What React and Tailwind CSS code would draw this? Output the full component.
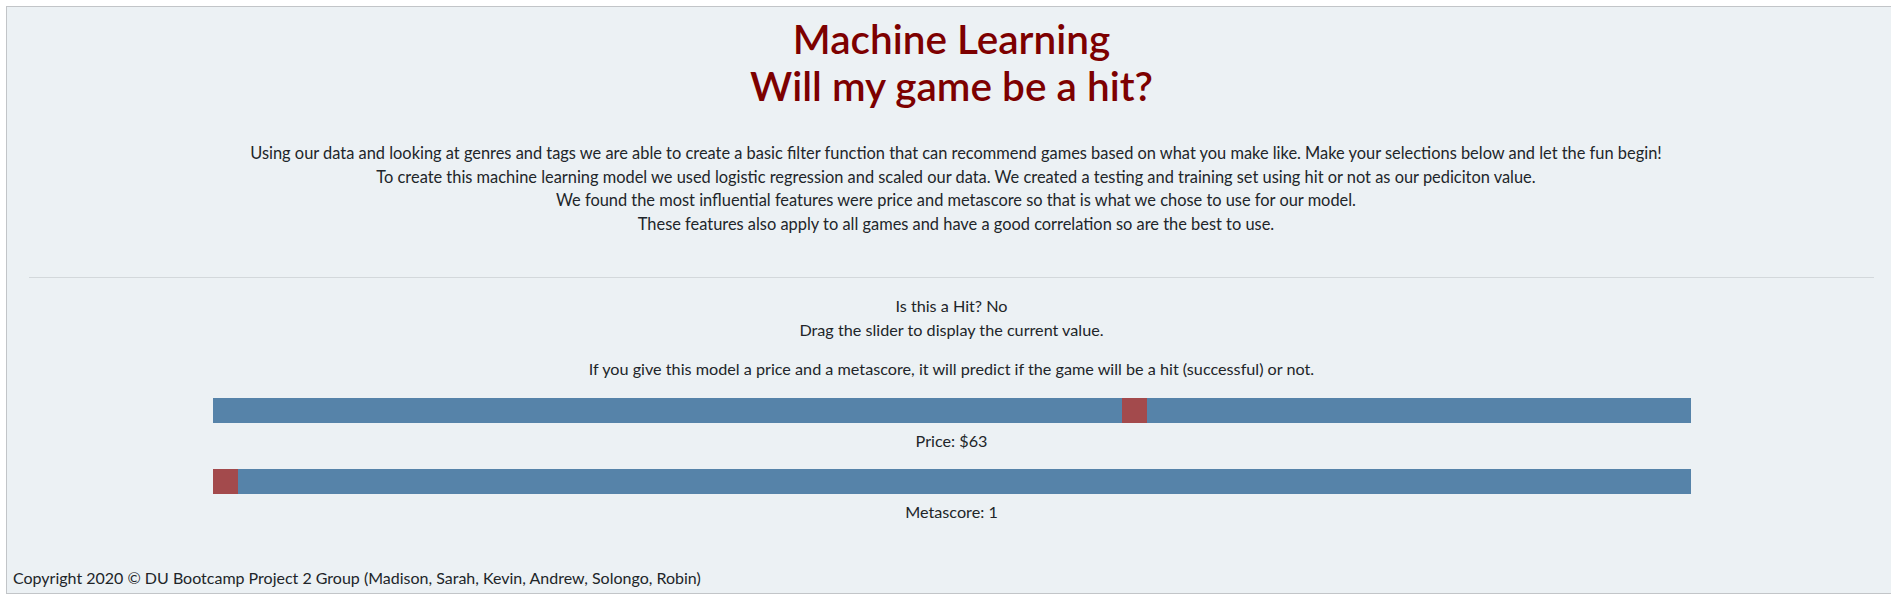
import React from 'react';

const font = { fontFamily: 'Lato, "Open Sans", sans-serif' };

function Slider({ value, min, max }) {
  // thumb position as a fraction of the track
  const pct = (value - min) / (max - min);
  return (
    <div className="h-[25px] w-[1478px] bg-[#5683a9] flex">
      <div className="h-full w-[25px] bg-[#a34a4c]" style={{ marginLeft: `calc((100% - 25px) * ${pct})` }} />
    </div>
  );
}

export default function App() {
  return (
    <div className="w-screen h-[605px] overflow-hidden bg-white pt-[6px] pl-[6px]" style={font}>
      <div className="w-[1891px] h-[588px] border border-[#c2c5c8] bg-[#ecf1f4] text-[#212529] flex flex-col">
        <div className="pt-[8px] text-center text-[#7d0000] text-[40.5px] leading-[47px] font-semibold">
          <h1>Machine Learning</h1>
          <h1>Will my game be a hit?</h1>
        </div>

        <div className="mt-[32px] pl-[9px] text-center text-[16.4px] leading-[23.5px]">
          <p>Using our data and looking at genres and tags we are able to create a basic filter function that can recommend games based on what you make like. Make your selections below and let the fun begin!</p>
          <p>To create this machine learning model we used logistic regression and scaled our data. We created a testing and training set using hit or not as our pediciton value.</p>
          <p>We found the most influential features were price and metascore so that is what we chose to use for our model.</p>
          <p>These features also apply to all games and have a good correlation so are the best to use.</p>
        </div>

        <hr className="mt-[42px] mx-[22px] border-t border-[#d3d8db]" />

        <div className="mt-[16px] flex flex-col items-center text-[16.2px] leading-[23.5px]">
          <p>Is this a Hit? No</p>
          <p>Drag the slider to display the current value.</p>
          <p className="mt-[16px]">If you give this model a price and a metascore, it will predict if the game will be a hit (successful) or not.</p>
          <div className="mt-[17px]">
            <Slider value={63} min={1} max={100} />
          </div>
          <p className="mt-[6px]">Price: $63</p>
          <div className="mt-[17px]">
            <Slider value={1} min={1} max={100} />
          </div>
          <p className="mt-[6px]">Metascore: 1</p>
        </div>

        <footer className="mt-auto mb-[4px] pl-[6px] text-[16px] leading-[23.5px]">
          Copyright 2020 © DU Bootcamp Project 2 Group (Madison, Sarah, Kevin, Andrew, Solongo, Robin)
        </footer>
      </div>
    </div>
  );
}
